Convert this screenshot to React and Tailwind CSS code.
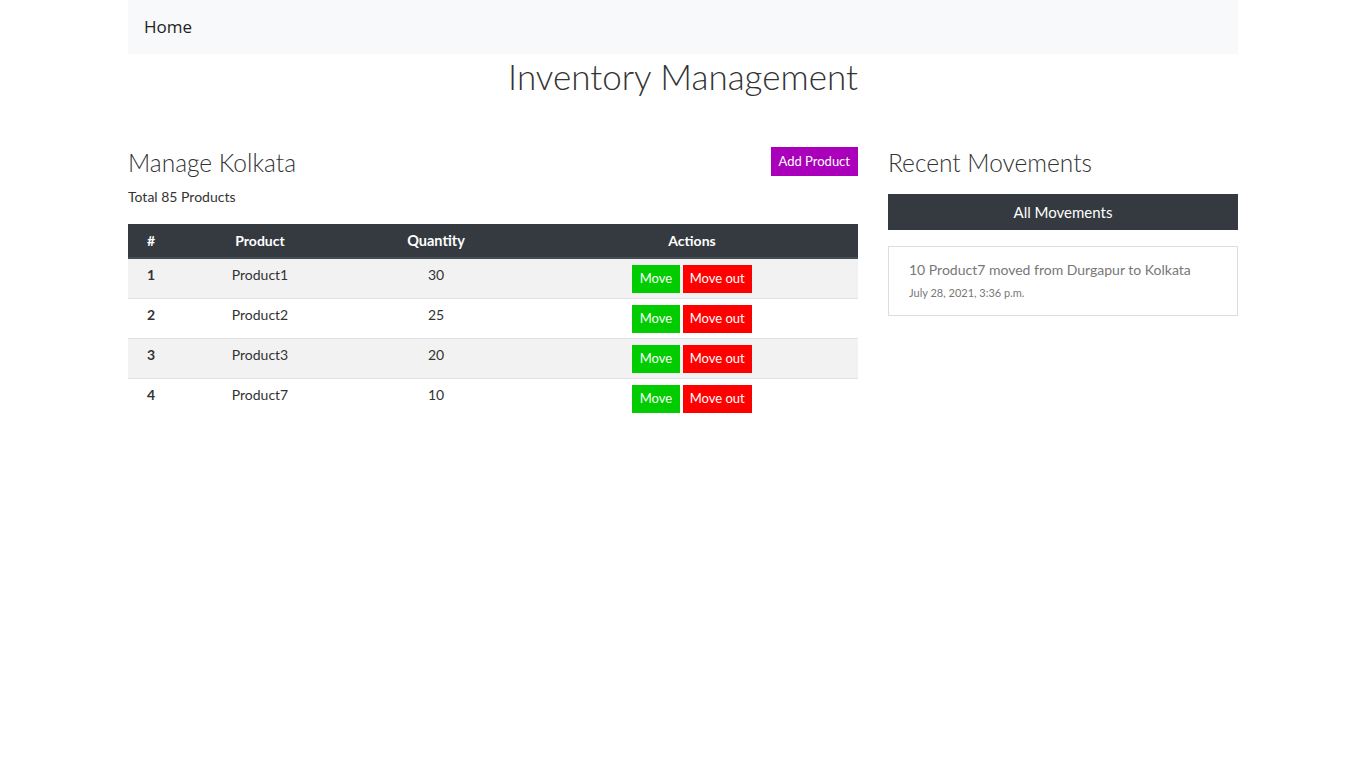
import React from 'react';

const rows = [
  { id: 1, name: 'Product1', qty: 30 },
  { id: 2, name: 'Product2', qty: 25 },
  { id: 3, name: 'Product3', qty: 20 },
  { id: 4, name: 'Product7', qty: 10 },
];

export default function App() {
  return (
    <div className="min-h-screen bg-white text-[#333] font-['Lato','Liberation_Sans',sans-serif]">
      <div className="w-[1110px] mx-auto">
        <nav className="h-[54px] bg-[#f8f9fa] px-4 flex items-center">
          <span className="text-[17px] text-[#222] font-['Open_Sans',sans-serif]">Home</span>
        </nav>

        <h1 className="text-center text-[35px] font-light leading-[44px] text-[#333]">Inventory Management</h1>

        <div className="flex gap-[30px] mt-[49px]">
          <div className="w-[730px]">
            <div className="flex justify-between items-start">
              <div>
                <h3 className="text-[24.5px] font-light leading-[32px] text-[#333]">Manage Kolkata</h3>
                <p className="text-[14px] leading-[20px] mt-[8px] text-[#333]">Total 85 Products</p>
              </div>
              <button className="bg-[#aa00bb] text-white text-[13px] h-[29px] px-[8px]">Add Product</button>
            </div>

            <table className="w-full mt-[17px] text-[14px] border-collapse">
              <thead>
                <tr className="bg-[#343a40] text-white h-[34px]">
                  <th className="w-[46px] font-bold border-b-2 border-[#454d55]">#</th>
                  <th className="w-[172px] font-bold border-b-2 border-[#454d55]">Product</th>
                  <th className="w-[180px] font-bold border-b-2 border-[#454d55] text-[14.5px]">Quantity</th>
                  <th className="font-bold border-b-2 border-[#454d55]">Actions</th>
                </tr>
              </thead>
              <tbody>
                {rows.map((r, i) => (
                  <tr key={r.id} className={`${i % 2 === 0 ? 'bg-[#f2f2f2]' : 'bg-white'} ${i > 0 ? 'border-t border-[#dee2e6]' : ''}`}>
                    <td className="text-center align-top pt-[5px] font-bold">{r.id}</td>
                    <td className="text-center align-top pt-[5px]">{r.name}</td>
                    <td className="text-center align-top pt-[5px]">{r.qty}</td>
                    <td className="text-center align-top pt-[6px] pb-[5px]">
                      <div className="flex justify-center gap-[3px]">
                        <button className="bg-[#00cc00] text-white text-[13px] h-[28px] px-[7.5px]">Move</button>
                        <button className="bg-[#ff0000] text-white text-[13px] h-[28px] px-[7px]">Move out</button>
                      </div>
                    </td>
                  </tr>
                ))}
              </tbody>
            </table>
          </div>

          <div className="w-[350px]">
            <h3 className="text-[24.5px] font-light leading-[32px] text-[#333]">Recent Movements</h3>
            <div className="mt-[15px] h-[36px] bg-[#343a40] text-white text-[15px] flex items-center justify-center">All Movements</div>
            <div className="mt-[16px] border border-[#dddddd] px-[20px] pt-[13px] pb-[14px]">
              <p className="text-[14px] text-[#777] leading-[20px]">10 Product7 moved from Durgapur to Kolkata</p>
              <p className="text-[11px] text-[#777] leading-[16px] mt-[5px]">July 28, 2021, 3:36 p.m.</p>
            </div>
          </div>
        </div>
      </div>
    </div>
  );
}
